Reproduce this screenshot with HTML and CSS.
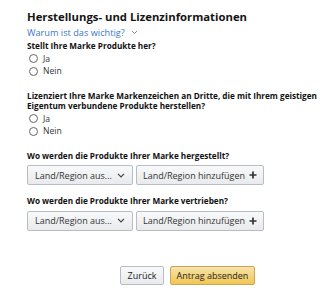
FILE: index.html
```html
<!DOCTYPE html>
<html lang="de">
<head>
    <meta charset="UTF-8">
    <meta name="viewport" content="width=device-width, initial-scale=1.0">
    <title>Herstellungs- und Lizenzinformationen</title>
    <link rel="stylesheet" href="styles.css">
</head>
<body>
    <div class="page">
        <h2 class="title">Herstellungs- und Lizenzinformationen</h2>
        <a class="why" href="#">Warum ist das wichtig? <svg class="chev" width="7" height="5" viewBox="0 0 7 5"><path d="M1 1l2.5 2.5L6 1" fill="none" stroke="#8c8c8c" stroke-width="1"/></svg></a>

        <div class="question">
            <div class="label">Stellt Ihre Marke Produkte her?</div>
            <label class="radio"><span class="dot"></span>Ja</label>
            <label class="radio"><span class="dot"></span>Nein</label>
        </div>

        <div class="question q2">
            <div class="label">Lizenziert Ihre Marke Markenzeichen an Dritte, die mit Ihrem geistigen Eigentum verbundene Produkte herstellen?</div>
            <label class="radio"><span class="dot"></span>Ja</label>
            <label class="radio"><span class="dot"></span>Nein</label>
        </div>

        <div class="question q3">
            <div class="label">Wo werden die Produkte Ihrer Marke hergestellt?</div>
            <div class="button-row">
                <button class="btn select">Land/Region aus... <svg width="8" height="5" viewBox="0 0 8 5"><path d="M1 0.8l3 3 3-3" fill="none" stroke="#444" stroke-width="1.2"/></svg></button>
                <button class="btn add">Land/Region hinzufügen <svg width="8" height="8" viewBox="0 0 8 8"><path d="M4 0.5v7M0.5 4h7" stroke="#333" stroke-width="1.7"/></svg></button>
            </div>
        </div>

        <div class="question q4">
            <div class="label">Wo werden die Produkte Ihrer Marke vertrieben?</div>
            <div class="button-row">
                <button class="btn select">Land/Region aus... <svg width="8" height="5" viewBox="0 0 8 5"><path d="M1 0.8l3 3 3-3" fill="none" stroke="#444" stroke-width="1.2"/></svg></button>
                <button class="btn add">Land/Region hinzufügen <svg width="8" height="8" viewBox="0 0 8 8"><path d="M4 0.5v7M0.5 4h7" stroke="#333" stroke-width="1.7"/></svg></button>
            </div>
        </div>

        <div class="actions">
            <button class="btn back">Zurück</button>
            <button class="btn primary">Antrag absenden</button>
        </div>
    </div>
</body>
</html>
```

FILE: styles.css
```css
body {
    margin: 0;
    background-color: #ffffff;
    font-family: "Open Sans", Arial, sans-serif;
    color: #111111;
}

.page {
    padding: 9px 0 0 27px;
}

.title {
    margin: 0;
    font-size: 11.3px;
    font-weight: bold;
    line-height: 16px;
    color: #141414;
}

.why {
    display: flex;
    align-items: center;
    gap: 6px;
    margin-top: 1px;
    font-size: 9.2px;
    line-height: 13px;
    color: #3a78c4;
    text-decoration: none;
}

.question {
    margin-top: 2px;
}

.q2 {
    margin-top: 13px;
}

.q3 {
    margin-top: 13px;
}

.q4 {
    margin-top: 11px;
}

.label {
    font-size: 8.2px;
    font-weight: bold;
    line-height: 10.5px;
    margin-bottom: 1px;
    color: #111111;
}

.radio {
    display: flex;
    align-items: center;
    font-size: 8.6px;
    line-height: 12.5px;
    color: #333333;
}

.dot {
    width: 7px;
    height: 7px;
    border: 1px solid #666666;
    border-radius: 50%;
    margin-right: 5px;
    margin-left: 2px;
}

.button-row {
    display: flex;
    gap: 3px;
    margin-top: 4px;
}

.btn {
    height: 20px;
    padding: 0 7px;
    border: 1px solid #b9bcc2;
    border-radius: 2px;
    background: linear-gradient(#f8f9fa, #e8eaed);
    font-family: "Open Sans", Arial, sans-serif;
    font-size: 9px;
    color: #333333;
    white-space: nowrap;
    display: flex;
    align-items: center;
    gap: 5px;
}

.btn svg {
    flex-shrink: 0;
}

.select {
    width: 106px;
    justify-content: space-between;
}

.add {
    width: 128px;
    justify-content: center;
    gap: 4px;
    padding: 0 4px;
}

.actions {
    display: flex;
    gap: 6px;
    margin: 35px 0 0 93px;
}

.back {
    width: 44px;
    height: 19px;
    justify-content: center;
    color: #222222;
}

.primary {
    width: 85px;
    height: 19px;
    justify-content: center;
    color: #222222;
    border-color: #caa650;
    background: linear-gradient(#f8e3ab, #f1c653);
}
```
